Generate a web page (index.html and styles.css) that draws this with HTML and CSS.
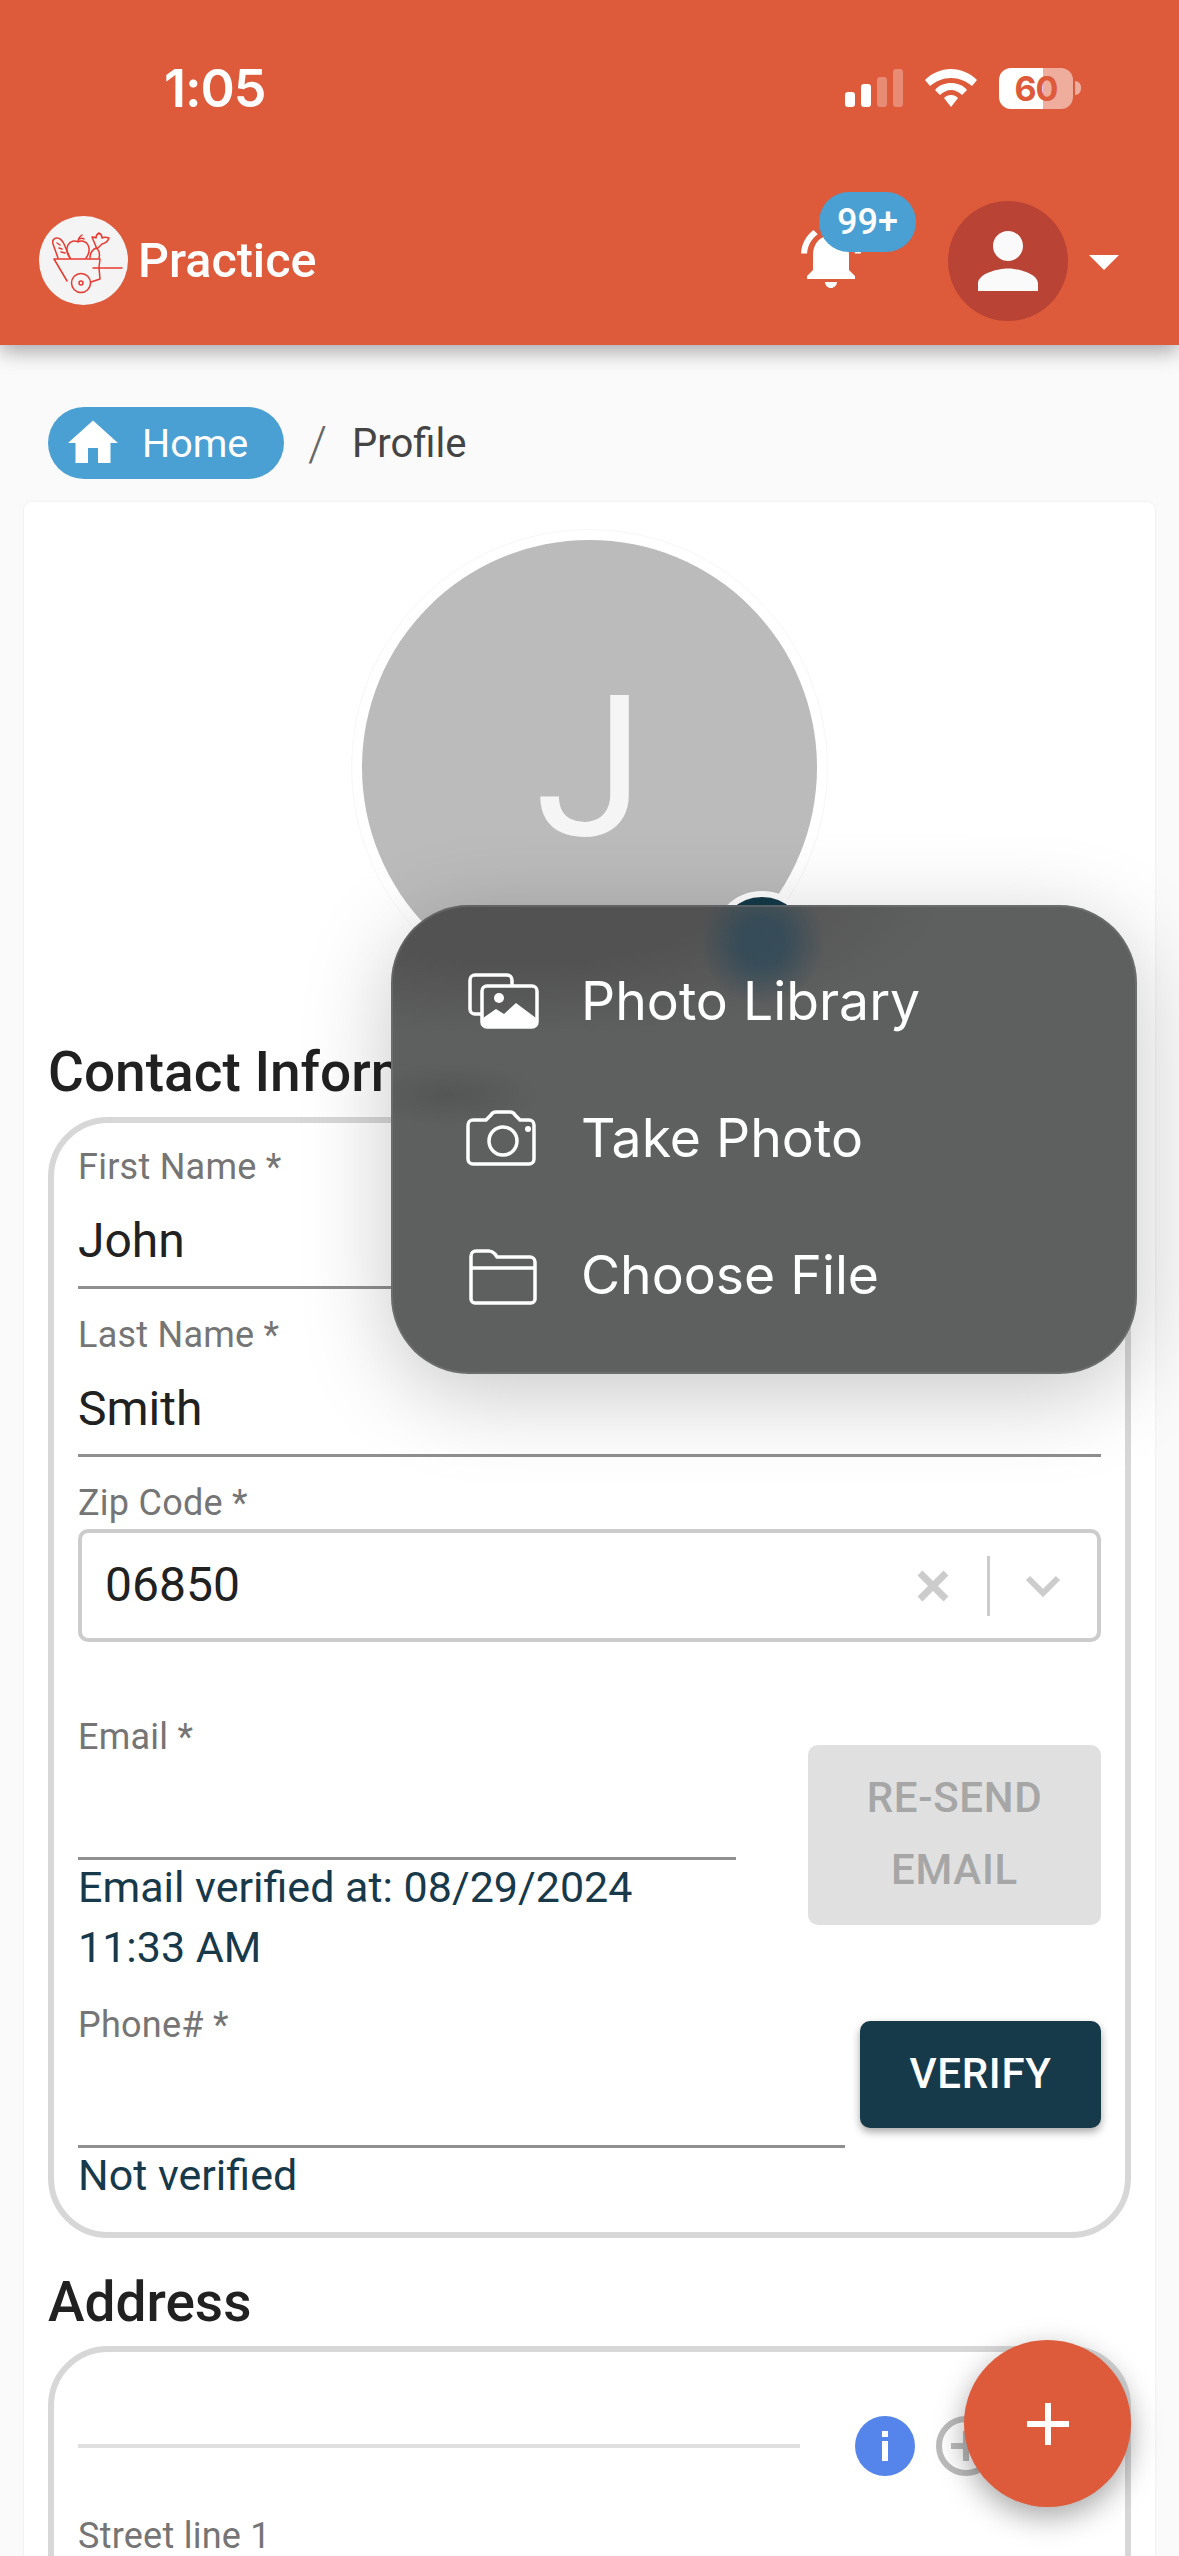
FILE: index.html
```html
<!DOCTYPE html>
<html lang="en">
<head>
<meta charset="utf-8">
<title>Profile</title>
<link rel="stylesheet" href="styles.css">
</head>
<body>
<div class="page">
  <header class="header">
    <div class="status">
      <span class="time">1:05</span>
      <div class="status-icons">
        <svg class="signal" width="58" height="38" viewBox="0 0 58 38"><rect x="0" y="23" width="10" height="15" rx="3" fill="#fff"/><rect x="16" y="15" width="10" height="23" rx="3" fill="#fff"/><rect x="32" y="8" width="10" height="30" rx="3" fill="#fff" fill-opacity=".3"/><rect x="48" y="0" width="10" height="38" rx="3" fill="#fff" fill-opacity=".3"/></svg>
        <svg class="wifi" width="52" height="38" viewBox="0 0 52 38"><path d="M26 0C16 0 7 4 0 11l5 6c6-5 13-8 21-8s15 3 21 8l5-6C45 4 36 0 26 0z" fill="#fff"/><path d="M26 14c-6 0-12 2-16 7l5 5c3-3 7-5 11-5s8 2 11 5l5-5c-4-5-10-7-16-7z" fill="#fff"/><path d="M26 26c-3 0-5 1-7 3l7 9 7-9c-2-2-4-3-7-3z" fill="#fff"/></svg>
        <div class="battery"><span>60</span></div>
        <span class="nub"></span>
      </div>
    </div>
    <div class="appbar">
      <div class="brand">
        <span class="logo">
          <svg width="89" height="89" viewBox="0 0 89 89" fill="none" stroke="#e8392f" stroke-width="1.5" stroke-linecap="round" stroke-linejoin="round">
            <path d="M15 43h46l-1 8M15 43l13 22M54 52h29M60 52l1 11-9 3"/>
            <circle cx="42" cy="67" r="9.5"/><circle cx="42" cy="67" r="2"/>
            <path d="M19 42l-5-14c-1-4 1-6 4-6 3 0 5 2 7 6l6 14M18 27l3 2M20 32l3 1M22 36l4 1"/>
            <path d="M31 42c-3-4-4-9-2-13 2-4 7-5 10-3 3-2 8-1 10 3 2 4 1 9-2 13M39 26c0-3 1-5 4-7M40 23c2-1 4-1 5 0"/>
            <path d="M51 42c0-4 2-8 6-10 3 2 4 6 3 10M53 21l5 12 5-5c4-1 6-3 7-6-3-1-5-1-7 0 0-2-1-4-3-5-2 1-3 3-3 5-1-1-2-1-4-1z"/>
          </svg>
        </span>
        <span class="brand-name">Practice</span>
      </div>
      <div class="appbar-right">
        <div class="bell">
          <svg width="72" height="72" viewBox="0 0 24 24" fill="#fff"><path d="M7.58 4.08L6.15 2.65C3.75 4.48 2.17 7.3 2.03 10.5h2c.15-2.65 1.51-4.97 3.55-6.42zm12.39 6.42h2c-.15-3.2-1.73-6.02-4.12-7.85l-1.42 1.43c2.02 1.45 3.39 3.77 3.54 6.42zM18 11c0-3.07-1.64-5.64-4.5-6.32V4c0-.83-.67-1.5-1.5-1.5s-1.5.67-1.5 1.5v.68C7.63 5.36 6 7.92 6 11v5l-2 2v1h16v-1l-2-2v-5zm-6 11c.14 0 .27-.01.4-.04.65-.14 1.18-.58 1.44-1.18.1-.24.15-.5.15-.78h-4c.01 1.1.9 2 2.01 2z"/></svg>
          <span class="badge">99+</span>
        </div>
        <div class="user">
          <svg width="90" height="90" viewBox="0 0 24 24" fill="#fafafa"><path d="M12 12c2.21 0 4-1.79 4-4s-1.79-4-4-4-4 1.79-4 4 1.79 4 4 4zm0 2c-2.67 0-8 1.34-8 4v2h16v-2c0-2.66-5.33-4-8-4z"/></svg>
        </div>
        <span class="caret"></span>
      </div>
    </div>
  </header>

  <nav class="crumbs">
    <a class="crumb-home">
      <svg width="60" height="60" viewBox="0 0 24 24" fill="#fff"><path d="M10 20v-6h4v6h5v-8h3L12 3 2 12h3v8z"/></svg>
      <span>Home</span>
    </a>
    <span class="crumb-sep">/</span>
    <span class="crumb-current">Profile</span>
  </nav>

  <main class="card">
    <div class="avatar-wrap">
      <div class="avatar-ring">
        <div class="avatar">J</div>
        <span class="camera-btn"></span>
      </div>
    </div>

    <h2 class="section-title">Contact Information</h2>
    <section class="box">
      <div class="field field-name">
        <label class="label">First Name *</label>
        <div class="value">John</div>
      </div>
      <div class="field field-name field-next">
        <label class="label">Last Name *</label>
        <div class="value">Smith</div>
      </div>
      <div class="zip">
        <label class="label">Zip Code *</label>
        <div class="select">
          <span class="select-value">06850</span>
          <svg class="select-x" width="32" height="32" viewBox="0 0 32 32"><path d="M3 3l26 26M29 3L3 29" stroke="#ccc" stroke-width="7"/></svg>
          <span class="select-div"></span>
          <svg class="select-chev" width="36" height="22" viewBox="0 0 36 22" fill="none"><path d="M3 3l15 15L33 3" stroke="#ccc" stroke-width="6"/></svg>
        </div>
      </div>
      <div class="row row-email">
        <div class="row-main">
          <div class="field">
            <label class="label">Email *</label>
            <div class="value"></div>
          </div>
          <p class="note">Email verified at: 08/29/2024<br>11:33 AM</p>
        </div>
        <button class="btn btn-disabled">RE-SEND EMAIL</button>
      </div>
      <div class="row row-phone">
        <div class="row-main">
          <div class="field">
            <label class="label">Phone# *</label>
            <div class="value"></div>
          </div>
          <p class="note">Not verified</p>
        </div>
        <button class="btn btn-primary">VERIFY</button>
      </div>
    </section>

    <h2 class="section-title section-address">Address</h2>
    <section class="box box-address">
      <div class="addr-row">
        <div class="addr-line"></div>
        <svg class="addr-info" width="60" height="60" viewBox="0 0 60 60"><circle cx="30" cy="30" r="30" fill="#5585ea"/><rect x="27" y="15" width="6" height="6" fill="#fff"/><rect x="27" y="25" width="6" height="20" fill="#fff"/></svg>
        <svg class="addr-plus" width="60" height="60" viewBox="0 0 60 60" fill="none"><circle cx="30" cy="30" r="27" stroke="#bbb" stroke-width="6"/><path d="M15 30h30M30 15v30" stroke="#bbb" stroke-width="6"/></svg>
      </div>
      <label class="label label-street">Street line 1</label>
    </section>
  </main>

  <div class="menu">
    <div class="menu-item">
      <svg width="82" height="60" viewBox="0 0 82 60" fill="none" stroke="#fff" stroke-width="3.5" stroke-linejoin="round"><path d="M19 43h-6a5 5 0 0 1-5-5V9a5 5 0 0 1 5-5h32a5 5 0 0 1 5 5v5"/><rect x="20" y="15" width="55" height="41" rx="5"/><circle cx="37" cy="27" r="5" fill="#fff" stroke="none"/><path d="M21 47l13-9 8 5 12-11 20 15v6a3 3 0 0 1-3 3H24a3 3 0 0 1-3-3z" fill="#fff" stroke="none"/></svg>
      <span>Photo Library</span>
    </div>
    <div class="menu-item">
      <svg width="82" height="60" viewBox="0 0 82 60" fill="none" stroke="#fff" stroke-width="3.5" stroke-linejoin="round"><path d="M11 12h13l5-5c1-2 3-3 5-3h14c2 0 4 1 5 3l5 5h9a5 5 0 0 1 5 5v34a5 5 0 0 1-5 5H11a5 5 0 0 1-5-5V17a5 5 0 0 1 5-5z"/><circle cx="41" cy="33" r="14"/><circle cx="66" cy="21" r="3" fill="#fff" stroke="none"/></svg>
      <span>Take Photo</span>
    </div>
    <div class="menu-item">
      <svg width="82" height="60" viewBox="0 0 82 60" fill="none" stroke="#fff" stroke-width="3.5" stroke-linejoin="round"><path d="M9 52V11a5 5 0 0 1 5-5h13c3 0 4 1 6 3l2 3h33a5 5 0 0 1 5 5v37a4 4 0 0 1-4 4H13a4 4 0 0 1-4-4z"/><path d="M9 23h64" stroke-width="3.5"/></svg>
      <span>Choose File</span>
    </div>
  </div>

  <button class="fab" aria-label="Add">
    <svg width="42" height="42" viewBox="0 0 42 42"><path d="M0 21h42M21 0v42" stroke="#fff" stroke-width="6"/></svg>
  </button>
</div>
</body>
</html>
```
FILE: styles.css
```css
* { box-sizing: border-box; }
html, body { margin: 0; padding: 0; }
body { font-family: Roboto, "Liberation Sans", sans-serif; background: #fafafa; }
.page { position: relative; width: 1179px; height: 2556px; overflow: hidden; background: #fafafa; }

.header { position: relative; z-index: 2; height: 345px; background: #dd5a3a; box-shadow: 0 6px 20px rgba(0,0,0,.35); }
.status { height: 176px; display: flex; align-items: center; justify-content: space-between; padding: 0 98px 0 164px; }
.time { font-family: Inter, sans-serif; font-weight: 600; font-size: 52px; color: #fff; letter-spacing: -1px; }
.status-icons { display: flex; align-items: center; }
.signal { margin-right: 22px; }
.wifi { margin-right: 22px; }
.battery { width: 74px; height: 41px; border-radius: 12px; background: linear-gradient(90deg, #fff 0 60%, rgba(255,255,255,.5) 60%); display: flex; align-items: center; justify-content: center; }
.battery span { font-family: Inter, sans-serif; font-weight: 700; font-size: 34px; color: #dd5a3a; letter-spacing: -1px; }
.nub { width: 6px; height: 14px; margin-left: 2px; border-radius: 0 6px 6px 0; background: rgba(255,255,255,.5); }

.appbar { height: 169px; display: flex; align-items: center; justify-content: space-between; padding: 0 60px 0 39px; }
.brand { display: flex; align-items: center; gap: 10px; }
.logo { width: 89px; height: 89px; border-radius: 50%; background: #f4f4f4; display: block; }
.logo svg { display: block; }
.brand-name { font-size: 48.5px; font-weight: 500; color: #fff; }
.appbar-right { display: flex; align-items: center; }
.bell { position: relative; width: 72px; height: 72px; margin-right: 81px; margin-top: -6px; }
.bell svg { display: block; }
.badge { position: absolute; left: 24px; top: -30px; width: 97px; height: 60px; border-radius: 30px; background: #4aa0d2; color: #fff; font-size: 36px; font-weight: 500; display: flex; align-items: center; justify-content: center; }
.user { width: 120px; height: 120px; border-radius: 50%; background: #b94436; display: flex; align-items: center; justify-content: center; margin-right: 21px; }
.caret { width: 0; height: 0; border-left: 15px solid transparent; border-right: 15px solid transparent; border-top: 15px solid #fff; margin-top: 3px; }

.crumbs { display: flex; align-items: center; margin: 62px 0 23px; padding-left: 48px; height: 72px; }
.crumb-home { width: 236px; height: 72px; border-radius: 36px; background: #4aa0d2; color: #fff; font-size: 39.5px; display: flex; align-items: center; gap: 19px; padding-left: 15px; }
.crumb-sep { font-size: 48px; font-weight: 300; color: #666; margin: 0 25px 0 24px; }
.crumb-current { font-size: 40px; color: #444; }

.card { margin: 0 24px; padding: 27px 24px 0; background: #fff; border-radius: 8px; box-shadow: 0 0 3px rgba(0,0,0,.08); height: 2200px; }
.avatar-wrap { display: flex; justify-content: center; }
.avatar-ring { position: relative; width: 477px; height: 477px; padding: 10px; border-radius: 50%; background: #fff; border: 1px solid #f7f7f7; }
.avatar { width: 100%; height: 100%; border-radius: 50%; background: #bbb; color: #f5f5f5; font-size: 197px; font-weight: 400; display: flex; align-items: center; justify-content: center; }
.camera-btn { position: absolute; left: 360px; top: 361px; width: 100px; height: 100px; border-radius: 50%; background: #153a4a; border: 6px solid #fff; }

.section-title { margin: 35px 0 14px; font-size: 55px; line-height: 62px; font-weight: 500; color: #212121; }
.section-address { margin: 33px 0 13px; }
.box { width: 1083px; border: 6px solid #d7d7d7; border-radius: 60px; padding: 21px 24px 27px 24px; }
.box-address { height: 400px; padding-top: 64px; }

.label { display: block; font-size: 36px; line-height: 44px; letter-spacing: .25px; color: #757575; }
.field { border-bottom: 3px solid #8f8f8f; height: 145px; }
.field-next { margin-top: 23px; }
.value { height: 98px; display: flex; align-items: center; font-size: 48px; color: #212121; }
.field-name .label { line-height: 46px; }
.field-name .value { height: 96px; padding-top: 4px; }

.zip { margin-top: 24px; }
.select { height: 113px; margin-top: 4px; border: 4px solid #ccc; border-radius: 10px; display: flex; align-items: center; padding: 0 36px 0 23px; }
.select-value { flex: 1; font-size: 48px; color: #212121; padding-bottom: 2px; }
.select-x { margin-right: 38px; }
.select-div { width: 3px; height: 60px; background: #ccc; margin-right: 35px; }

.row { display: flex; justify-content: space-between; align-items: flex-start; }
.row-email { margin-top: 73px; }
.row-email .row-main { width: 658px; }
.row-phone { margin-top: 26px; }
.row-phone .row-main { width: 767px; }
.note { margin: -3px 0 0; font-size: 43px; line-height: 60px; color: #17394a; }

.btn { border: 0; border-radius: 10px; font-family: inherit; font-size: 42px; font-weight: 500; letter-spacing: .7px; }
.btn-disabled { width: 293px; height: 180px; margin-top: 30px; background: #e0e0e0; color: #a6a6a6; line-height: 72px; padding: 0 30px 3px; }
.btn-primary { width: 241px; height: 107px; margin-top: 18px; padding: 0 0 2px; background: #163a4a; color: #fff; box-shadow: 0 4px 8px rgba(0,0,0,.35); }

.addr-row { display: flex; align-items: flex-end; }
.addr-line { width: 722px; height: 4px; background: #e0e0e0; margin-bottom: 28px; }
.addr-info { margin-left: 55px; }
.addr-plus { margin-left: 21px; }
.label-street { margin-top: 38px; }

.menu {
  position: absolute; z-index: 3; left: 391px; top: 905px; width: 746px; height: 469px;
  padding: 27px 0 0 71px; border-radius: 78px;
  background-color: #5e5f5f;
  background-image:
    radial-gradient(ellipse 62px 62px at 371px 37px, rgba(42,72,88,.72) 35%, rgba(42,72,88,0) 100%),
    radial-gradient(ellipse 90px 32px at 60px 190px, rgba(70,70,70,.4), rgba(70,70,70,0)),
    radial-gradient(ellipse 420px 130px at 130px 0, #525252 45%, rgba(82,82,82,0) 100%);
  box-shadow: inset 0 0 0 2px rgba(140,140,140,.3), 0 20px 90px rgba(0,0,0,.22);
}
.menu-item { height: 137px; display: flex; align-items: center; gap: 37px; font-family: Inter, sans-serif; font-size: 53.5px; color: #fff; }
.menu-item svg { flex: none; }

.fab { position: absolute; z-index: 2; left: 964px; top: 2340px; width: 167px; height: 167px; border: 0; padding: 0; border-radius: 50%; background: #dd5a3a; display: flex; align-items: center; justify-content: center; box-shadow: 0 10px 30px rgba(0,0,0,.35); }
```
